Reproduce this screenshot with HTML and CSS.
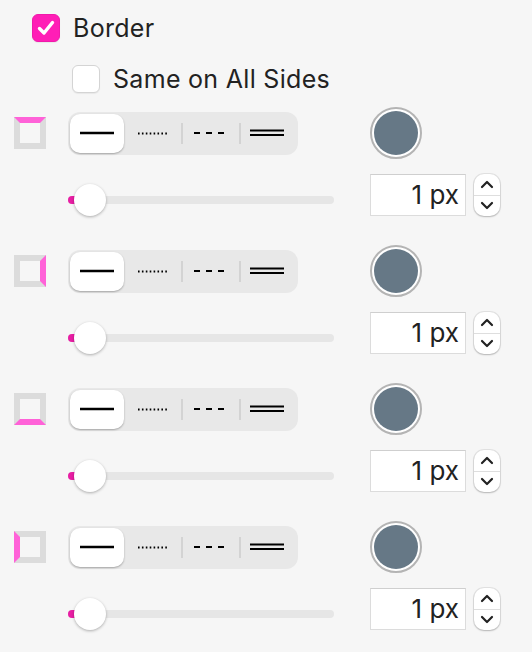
FILE: index.html
```html
<!DOCTYPE html>
<html lang="en">
<head>
    <meta charset="UTF-8">
    <title>Border</title>
    <link rel="stylesheet" href="styles.css">
</head>
<body>
<div class="panel">

    <label class="check-row main">
        <span class="check on">
            <svg width="18" height="16" viewBox="0 0 18 16"><path d="M2.5 8.5 L7 13 L15.5 2.5" fill="none" stroke="#fff" stroke-width="3.4" stroke-linecap="round" stroke-linejoin="round"/></svg>
        </span>
        <span class="check-label">Border</span>
    </label>

    <label class="check-row sub">
        <span class="check"></span>
        <span class="check-label">Same on All Sides</span>
    </label>

    <!-- one block per side: top, right, bottom, left -->
    <div class="side">
        <div class="side-line">
            <span class="side-icon top"></span>
            <div class="segmented">
                <span class="seg selected"><svg width="34" height="6"><line x1="0" y1="3" x2="34" y2="3" stroke="#000" stroke-width="2.4"/></svg></span>
                <span class="seg"><svg width="32" height="6"><line x1="1" y1="3.5" x2="32" y2="3.5" stroke="#000" stroke-width="2" stroke-dasharray="1.6 2.3"/></svg></span>
                <span class="seg"><svg width="32" height="6"><line x1="0" y1="3" x2="32" y2="3" stroke="#000" stroke-width="2.2" stroke-dasharray="6 6"/></svg></span>
                <span class="seg"><svg width="34" height="8"><line x1="0" y1="1.5" x2="34" y2="1.5" stroke="#000" stroke-width="2"/><line x1="0" y1="6" x2="34" y2="6" stroke="#000" stroke-width="2"/></svg></span>
            </div>
            <span class="swatch"><span class="swatch-fill"></span></span>
        </div>
        <div class="side-line lower">
            <div class="slider"><span class="slider-fill"></span><span class="knob"></span></div>
            <div class="size-box">1 px</div>
            <div class="stepper">
                <span class="step"><svg width="14" height="9" viewBox="0 0 14 9"><path d="M2 7 L7 2 L12 7" fill="none" stroke="#222" stroke-width="2.2" stroke-linecap="round" stroke-linejoin="round"/></svg></span>
                <span class="step down"><svg width="14" height="9" viewBox="0 0 14 9"><path d="M2 2 L7 7 L12 2" fill="none" stroke="#222" stroke-width="2.2" stroke-linecap="round" stroke-linejoin="round"/></svg></span>
            </div>
        </div>
    </div>

    <div class="side">
        <div class="side-line">
            <span class="side-icon right"></span>
            <div class="segmented">
                <span class="seg selected"><svg width="34" height="6"><line x1="0" y1="3" x2="34" y2="3" stroke="#000" stroke-width="2.4"/></svg></span>
                <span class="seg"><svg width="32" height="6"><line x1="1" y1="3.5" x2="32" y2="3.5" stroke="#000" stroke-width="2" stroke-dasharray="1.6 2.3"/></svg></span>
                <span class="seg"><svg width="32" height="6"><line x1="0" y1="3" x2="32" y2="3" stroke="#000" stroke-width="2.2" stroke-dasharray="6 6"/></svg></span>
                <span class="seg"><svg width="34" height="8"><line x1="0" y1="1.5" x2="34" y2="1.5" stroke="#000" stroke-width="2"/><line x1="0" y1="6" x2="34" y2="6" stroke="#000" stroke-width="2"/></svg></span>
            </div>
            <span class="swatch"><span class="swatch-fill"></span></span>
        </div>
        <div class="side-line lower">
            <div class="slider"><span class="slider-fill"></span><span class="knob"></span></div>
            <div class="size-box">1 px</div>
            <div class="stepper">
                <span class="step"><svg width="14" height="9" viewBox="0 0 14 9"><path d="M2 7 L7 2 L12 7" fill="none" stroke="#222" stroke-width="2.2" stroke-linecap="round" stroke-linejoin="round"/></svg></span>
                <span class="step down"><svg width="14" height="9" viewBox="0 0 14 9"><path d="M2 2 L7 7 L12 2" fill="none" stroke="#222" stroke-width="2.2" stroke-linecap="round" stroke-linejoin="round"/></svg></span>
            </div>
        </div>
    </div>

    <div class="side">
        <div class="side-line">
            <span class="side-icon bottom"></span>
            <div class="segmented">
                <span class="seg selected"><svg width="34" height="6"><line x1="0" y1="3" x2="34" y2="3" stroke="#000" stroke-width="2.4"/></svg></span>
                <span class="seg"><svg width="32" height="6"><line x1="1" y1="3.5" x2="32" y2="3.5" stroke="#000" stroke-width="2" stroke-dasharray="1.6 2.3"/></svg></span>
                <span class="seg"><svg width="32" height="6"><line x1="0" y1="3" x2="32" y2="3" stroke="#000" stroke-width="2.2" stroke-dasharray="6 6"/></svg></span>
                <span class="seg"><svg width="34" height="8"><line x1="0" y1="1.5" x2="34" y2="1.5" stroke="#000" stroke-width="2"/><line x1="0" y1="6" x2="34" y2="6" stroke="#000" stroke-width="2"/></svg></span>
            </div>
            <span class="swatch"><span class="swatch-fill"></span></span>
        </div>
        <div class="side-line lower">
            <div class="slider"><span class="slider-fill"></span><span class="knob"></span></div>
            <div class="size-box">1 px</div>
            <div class="stepper">
                <span class="step"><svg width="14" height="9" viewBox="0 0 14 9"><path d="M2 7 L7 2 L12 7" fill="none" stroke="#222" stroke-width="2.2" stroke-linecap="round" stroke-linejoin="round"/></svg></span>
                <span class="step down"><svg width="14" height="9" viewBox="0 0 14 9"><path d="M2 2 L7 7 L12 2" fill="none" stroke="#222" stroke-width="2.2" stroke-linecap="round" stroke-linejoin="round"/></svg></span>
            </div>
        </div>
    </div>

    <div class="side">
        <div class="side-line">
            <span class="side-icon left"></span>
            <div class="segmented">
                <span class="seg selected"><svg width="34" height="6"><line x1="0" y1="3" x2="34" y2="3" stroke="#000" stroke-width="2.4"/></svg></span>
                <span class="seg"><svg width="32" height="6"><line x1="1" y1="3.5" x2="32" y2="3.5" stroke="#000" stroke-width="2" stroke-dasharray="1.6 2.3"/></svg></span>
                <span class="seg"><svg width="32" height="6"><line x1="0" y1="3" x2="32" y2="3" stroke="#000" stroke-width="2.2" stroke-dasharray="6 6"/></svg></span>
                <span class="seg"><svg width="34" height="8"><line x1="0" y1="1.5" x2="34" y2="1.5" stroke="#000" stroke-width="2"/><line x1="0" y1="6" x2="34" y2="6" stroke="#000" stroke-width="2"/></svg></span>
            </div>
            <span class="swatch"><span class="swatch-fill"></span></span>
        </div>
        <div class="side-line lower">
            <div class="slider"><span class="slider-fill"></span><span class="knob"></span></div>
            <div class="size-box">1 px</div>
            <div class="stepper">
                <span class="step"><svg width="14" height="9" viewBox="0 0 14 9"><path d="M2 7 L7 2 L12 7" fill="none" stroke="#222" stroke-width="2.2" stroke-linecap="round" stroke-linejoin="round"/></svg></span>
                <span class="step down"><svg width="14" height="9" viewBox="0 0 14 9"><path d="M2 2 L7 7 L12 2" fill="none" stroke="#222" stroke-width="2.2" stroke-linecap="round" stroke-linejoin="round"/></svg></span>
            </div>
        </div>
    </div>

</div>
</body>
</html>
```

FILE: styles.css
```css
body {
    margin: 0;
    background-color: #f6f6f6;
    font-family: 'Inter', 'Liberation Sans', sans-serif;
    color: #222;
}

.panel {
    width: 532px;
    height: 652px;
    overflow: hidden;
}

/* checkboxes */
.check-row {
    display: flex;
    align-items: center;
}
.check-row.main {
    padding: 14px 0 0 32px;
    height: 28px;
}
.check-row.sub {
    padding: 23px 0 0 72px;
    height: 28px;
}

.check {
    width: 28px;
    height: 28px;
    box-sizing: border-box;
    border-radius: 6px;
    background: #fff;
    border: 1px solid #d4d4d4;
    box-shadow: 0 1px 1px rgba(0, 0, 0, 0.06);
    display: flex;
    align-items: center;
    justify-content: center;
}
.check.on {
    background: #ff1eb6;
    border-color: #f01aab;
}

.check-label {
    font-size: 25px;
    margin-left: 13px;
    letter-spacing: 0.3px;
}

/* one side block */
.side {
    padding-bottom: 33px;
}
.check-row.sub + .side {
    margin-top: 18px;
}

.side-line {
    display: flex;
    align-items: center;
    height: 44px;
}
.side-line.lower {
    height: 42px;
    margin-top: 19px;
}

.side-icon {
    width: 32px;
    height: 32px;
    box-sizing: border-box;
    margin-left: 14px;
    border: 6px solid #dcdcdc;
}
.side-icon.top { border-top-color: #ff62d8; }
.side-icon.right { border-right-color: #ff62d8; }
.side-icon.bottom { border-bottom-color: #ff62d8; }
.side-icon.left { border-left-color: #ff62d8; }

.segmented {
    margin-left: 22px;
    width: 230px;
    height: 43px;
    box-sizing: border-box;
    padding: 2px;
    background: #e8e8e8;
    border-radius: 12px;
    display: flex;
}
.seg {
    flex: 1;
    display: flex;
    align-items: center;
    justify-content: center;
    position: relative;
}
.seg + .seg + .seg::before {
    content: "";
    position: absolute;
    left: 0;
    top: 9px;
    bottom: 9px;
    width: 2px;
    background: #d3d3d3;
}
.seg.selected {
    flex: 0 0 54px;
    background: #fff;
    border-radius: 10px;
    box-shadow: 0 1px 2px rgba(0, 0, 0, 0.3);
}

.swatch {
    margin-left: 72px;
    width: 52px;
    height: 52px;
    box-sizing: border-box;
    border-radius: 50%;
    border: 2px solid #b4b4b4;
    background: #fff;
    padding: 2px;
}
.swatch-fill {
    display: block;
    width: 100%;
    height: 100%;
    border-radius: 50%;
    background: #667886;
}

/* slider + size */
.slider {
    margin-left: 68px;
    width: 266px;
    height: 8px;
    margin-top: 10px;
    border-radius: 4px;
    background: #e6e6e6;
    position: relative;
}
.slider-fill {
    position: absolute;
    left: 0;
    top: 0;
    width: 20px;
    height: 8px;
    border-radius: 4px;
    background: #e81ea4;
}
.knob {
    position: absolute;
    left: 6px;
    top: -12px;
    width: 32px;
    height: 32px;
    border-radius: 50%;
    background: #fff;
    box-shadow: 0 1px 3px rgba(0, 0, 0, 0.3);
}

.size-box {
    margin-left: 36px;
    width: 96px;
    height: 42px;
    box-sizing: border-box;
    background: #fff;
    border: 1px solid #dcdcdc;
    border-top-color: #cfcfcf;
    text-align: right;
    font-size: 26px;
    line-height: 40px;
    padding-right: 6px;
}

.stepper {
    margin-left: 8px;
    width: 26px;
    height: 42px;
    box-sizing: border-box;
    background: #fff;
    border-radius: 10px;
    box-shadow: 0 0 0 1px rgba(0, 0, 0, 0.08), 0 1px 2px rgba(0, 0, 0, 0.2);
    display: flex;
    flex-direction: column;
}
.step {
    flex: 1;
    display: flex;
    align-items: center;
    justify-content: center;
}
.step.down {
    border-top: 1px solid #dedede;
}
```
